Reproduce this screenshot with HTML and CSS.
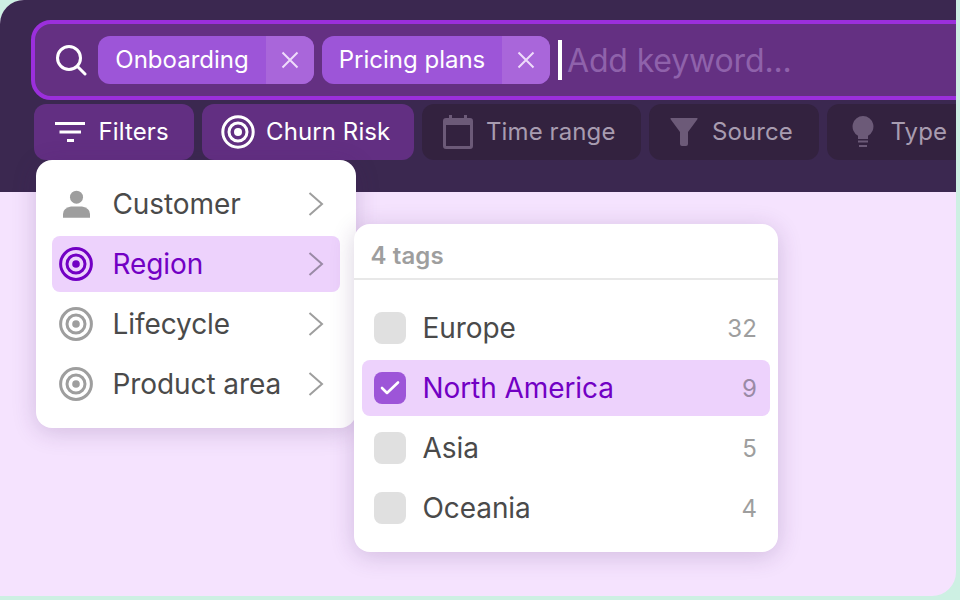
FILE: index.html
```html
<!DOCTYPE html>
<html lang="en">
<head>
<meta charset="utf-8">
<title>Filters</title>
<link rel="stylesheet" href="styles.css">
</head>
<body>
<div class="app">
  <header class="top">
    <div class="search">
      <svg class="search-icon" width="32" height="32" viewBox="0 0 32 32"><circle cx="14" cy="14" r="11.5" fill="none" stroke="#fff" stroke-width="3"/><path d="M22.5 22.5 L30 30" stroke="#fff" stroke-width="3" stroke-linecap="round"/></svg>
      <div class="chip"><span class="chip-label chip-label-a">Onboarding</span><span class="chip-x"><svg width="18" height="18" viewBox="0 0 18 18"><path d="M1.5 1.5 L16.5 16.5 M16.5 1.5 L1.5 16.5" stroke="#eedcfb" stroke-width="2"/></svg></span></div>
      <div class="chip"><span class="chip-label chip-label-b">Pricing plans</span><span class="chip-x"><svg width="18" height="18" viewBox="0 0 18 18"><path d="M1.5 1.5 L16.5 16.5 M16.5 1.5 L1.5 16.5" stroke="#eedcfb" stroke-width="2"/></svg></span></div>
      <span class="caret"></span>
      <span class="placeholder">Add keyword...</span>
    </div>
    <div class="toolbar">
      <div class="tool tool-on tool-filters">
        <svg width="30" height="20" viewBox="0 0 30 20"><path d="M0 1.5 H30 M4.5 10 H26 M12 18.5 H19" stroke="#fff" stroke-width="3"/></svg>
        <span class="tool-label">Filters</span>
      </div>
      <div class="tool tool-on tool-churn">
        <svg width="34" height="34" viewBox="0 0 34 34"><circle cx="17" cy="17" r="15.2" fill="none" stroke="#fff" stroke-width="3"/><circle cx="17" cy="17" r="9" fill="none" stroke="#fff" stroke-width="3"/><circle cx="17" cy="17" r="4" fill="#fff"/></svg>
        <span class="tool-label">Churn Risk</span>
      </div>
      <div class="tool tool-time">
        <svg width="30" height="34" viewBox="0 0 30 34"><path fill-rule="evenodd" d="M6 0 H9 V3 H21 V0 H24 V3 H27 Q30 3 30 6 V31 Q30 34 27 34 H3 Q0 34 0 31 V6 Q0 3 3 3 H6 Z M3 10 V31 H27 V10 Z" fill="#6c5a78"/></svg>
        <span class="tool-label">Time range</span>
      </div>
      <div class="tool tool-source">
        <svg width="28" height="28" viewBox="0 0 28 28"><path d="M1 0 H27 Q28 0 27.4 1.2 L18 14 V26 Q18 28 16 28 H12 Q10 28 10 26 V14 L0.6 1.2 Q0 0 1 0 Z" fill="#6c5a78"/></svg>
        <span class="tool-label">Source</span>
      </div>
      <div class="tool tool-type">
        <svg width="22" height="32" viewBox="0 0 22 32"><path d="M11 0 A10.5 10.5 0 0 1 16 19.7 V23 H6 V19.7 A10.5 10.5 0 0 1 11 0 Z" fill="#6c5a78"/><path d="M6 25.5 H16 M7 30 H15" stroke="#6c5a78" stroke-width="2"/></svg>
        <span class="tool-label">Type</span>
      </div>
    </div>
  </header>

  <div class="menu">
    <div class="menu-item">
      <svg class="menu-icon" width="34" height="34" viewBox="0 0 34 34"><circle cx="17.5" cy="10.2" r="6.5" fill="#9e9e9e"/><path d="M4 30.7 V27 Q4 21 12 19.5 H23 Q31 21 31 27 V30.7 Z" fill="#9e9e9e"/></svg>
      <span class="menu-label">Customer</span>
      <svg class="chev" width="16" height="24" viewBox="0 0 16 24"><path d="M1.5 1 L14 12 L1.5 23" fill="none" stroke="#9e9e9e" stroke-width="2"/></svg>
    </div>
    <div class="menu-item menu-item-on">
      <svg class="menu-icon" width="34" height="34" viewBox="0 0 34 34"><circle cx="17" cy="17" r="15.4" fill="none" stroke="#7200c4" stroke-width="3"/><circle cx="17" cy="17" r="9" fill="none" stroke="#7200c4" stroke-width="3"/><circle cx="17" cy="17" r="3.8" fill="#7200c4"/></svg>
      <span class="menu-label">Region</span>
      <svg class="chev" width="16" height="24" viewBox="0 0 16 24"><path d="M1.5 1 L14 12 L1.5 23" fill="none" stroke="#9a8aa6" stroke-width="2"/></svg>
    </div>
    <div class="menu-item">
      <svg class="menu-icon" width="34" height="34" viewBox="0 0 34 34"><circle cx="17" cy="17" r="15.4" fill="none" stroke="#9e9e9e" stroke-width="3"/><circle cx="17" cy="17" r="9" fill="none" stroke="#9e9e9e" stroke-width="3"/><circle cx="17" cy="17" r="3.8" fill="#9e9e9e"/></svg>
      <span class="menu-label">Lifecycle</span>
      <svg class="chev" width="16" height="24" viewBox="0 0 16 24"><path d="M1.5 1 L14 12 L1.5 23" fill="none" stroke="#9e9e9e" stroke-width="2"/></svg>
    </div>
    <div class="menu-item">
      <svg class="menu-icon" width="34" height="34" viewBox="0 0 34 34"><circle cx="17" cy="17" r="15.4" fill="none" stroke="#9e9e9e" stroke-width="3"/><circle cx="17" cy="17" r="9" fill="none" stroke="#9e9e9e" stroke-width="3"/><circle cx="17" cy="17" r="3.8" fill="#9e9e9e"/></svg>
      <span class="menu-label">Product area</span>
      <svg class="chev" width="16" height="24" viewBox="0 0 16 24"><path d="M1.5 1 L14 12 L1.5 23" fill="none" stroke="#9e9e9e" stroke-width="2"/></svg>
    </div>
  </div>

  <div class="submenu">
    <div class="sub-head">4 tags</div>
    <div class="sub-list">
      <div class="sub-item"><span class="check"></span><span class="sub-label">Europe</span><span class="count">32</span></div>
      <div class="sub-item sub-item-on"><span class="check check-on"><svg width="20" height="16" viewBox="0 0 20 16"><path d="M2 8 L7 13 L18 2.5" fill="none" stroke="#fff" stroke-width="2.6" stroke-linecap="round" stroke-linejoin="round"/></svg></span><span class="sub-label">North America</span><span class="count">9</span></div>
      <div class="sub-item"><span class="check"></span><span class="sub-label">Asia</span><span class="count">5</span></div>
      <div class="sub-item"><span class="check"></span><span class="sub-label">Oceania</span><span class="count">4</span></div>
    </div>
  </div>
</div>
</body>
</html>
```
FILE: styles.css
```css
html, body {
  margin: 0;
  padding: 0;
  width: 960px;
  height: 600px;
  overflow: hidden;
  background: #cdf0e3;
  font-family: "Inter", "Liberation Sans", sans-serif;
}
.app {
  position: relative;
  width: 956px;
  height: 596px;
  background: #f5e3fe;
  border-radius: 24px 0 24px 0;
  overflow: hidden;
}
.top {
  box-sizing: border-box;
  height: 192px;
  padding: 20px 0 0 31px;
  background: #3b2850;
  overflow: hidden;
}
.search {
  box-sizing: border-box;
  display: flex;
  align-items: center;
  width: 1000px;
  height: 80px;
  padding-left: 20px;
  background: #643082;
  border: 4px solid #9b2fdc;
  border-radius: 20px;
}
.search-icon { flex: none; margin-right: 11px; }
.chip {
  display: flex;
  height: 48px;
  margin-right: 8px;
  border-radius: 12px;
  overflow: hidden;
  background: #9d55d8;
  color: #fff;
  font-size: 24px;
}
.chip-label {
  box-sizing: border-box;
  display: flex;
  align-items: center;
  justify-content: center;
  padding-bottom: 2px;
  white-space: nowrap;
}
.chip-label-a { width: 168px; }
.chip-label-b { width: 180px; }
.chip-x {
  display: flex;
  align-items: center;
  justify-content: center;
  width: 48px;
  background: #a966da;
}
.caret { width: 4px; height: 40px; background: #fff; flex: none; }
.placeholder { margin-left: 5px; color: #8f62ab; font-size: 32px; letter-spacing: -0.15px; }
.toolbar {
  display: flex;
  gap: 8px;
  margin: 4px 0 0 3px;
}
.tool {
  box-sizing: border-box;
  display: flex;
  flex: none;
  align-items: center;
  height: 56px;
  border-radius: 12px;
  background: #33223f;
  color: #a89cb0;
  font-size: 24px;
  letter-spacing: 0.1px;
}
.tool-label { padding-bottom: 2px; }
.tool-on { background: #622f82; color: #fff; }
.tool-filters { width: 160px; padding-left: 21px; gap: 13.5px; }
.tool-churn { width: 212px; padding-left: 19px; gap: 11px; }
.tool-time { width: 219px; padding-left: 21px; gap: 13px; }
.tool-source { width: 170px; padding-left: 21px; gap: 14px; }
.tool-type { width: 160px; padding-left: 25px; gap: 16.5px; }
.menu {
  position: absolute;
  left: 36px;
  top: 160px;
  box-sizing: border-box;
  display: flex;
  flex-direction: column;
  gap: 4px;
  width: 320px;
  height: 268px;
  padding: 16px;
  background: #fff;
  border-radius: 16px;
  box-shadow: 0 4px 24px rgba(70, 30, 100, 0.2);
}
.menu-item {
  display: flex;
  align-items: center;
  height: 56px;
  padding: 0 16px 0 7px;
  border-radius: 8px;
  color: #4a4a4a;
  font-size: 28px;
  letter-spacing: -0.08px;
}
.menu-item-on { background: #edd2fc; color: #7200c4; }
.menu-icon { flex: none; margin-right: 19.5px; }
.menu-label { flex: 1; }
.chev { flex: none; }
.submenu {
  position: absolute;
  left: 354px;
  top: 224px;
  width: 424px;
  height: 328px;
  background: #fff;
  border-radius: 16px;
  box-shadow: 0 4px 24px rgba(70, 30, 100, 0.2);
}
.sub-head {
  box-sizing: border-box;
  height: 56px;
  padding: 17px 0 0 16.5px;
  border-bottom: 2px solid #e8e8e8;
  color: #9e9e9e;
  font-size: 24px;
  font-weight: 600;
  line-height: 30px;
  letter-spacing: 0.1px;
}
.sub-list {
  display: flex;
  flex-direction: column;
  gap: 4px;
  padding: 20px 8px 0;
}
.sub-item {
  display: flex;
  align-items: center;
  height: 56px;
  padding: 0 13px 0 12px;
  border-radius: 8px;
  color: #4a4a4a;
  font-size: 28px;
  letter-spacing: -0.08px;
}
.sub-item-on { background: #edd2fc; color: #7200c4; }
.check {
  display: flex;
  align-items: center;
  justify-content: center;
  flex: none;
  width: 32px;
  height: 32px;
  margin-right: 16.5px;
  border-radius: 8px;
  background: #e0e0e0;
}
.check-on { background: #9d55d8; }
.sub-label { flex: 1; }
.count { color: #9e9e9e; font-size: 24px; letter-spacing: 0.1px; }
.sub-item-on .count { color: #9a8aa6; }
```
